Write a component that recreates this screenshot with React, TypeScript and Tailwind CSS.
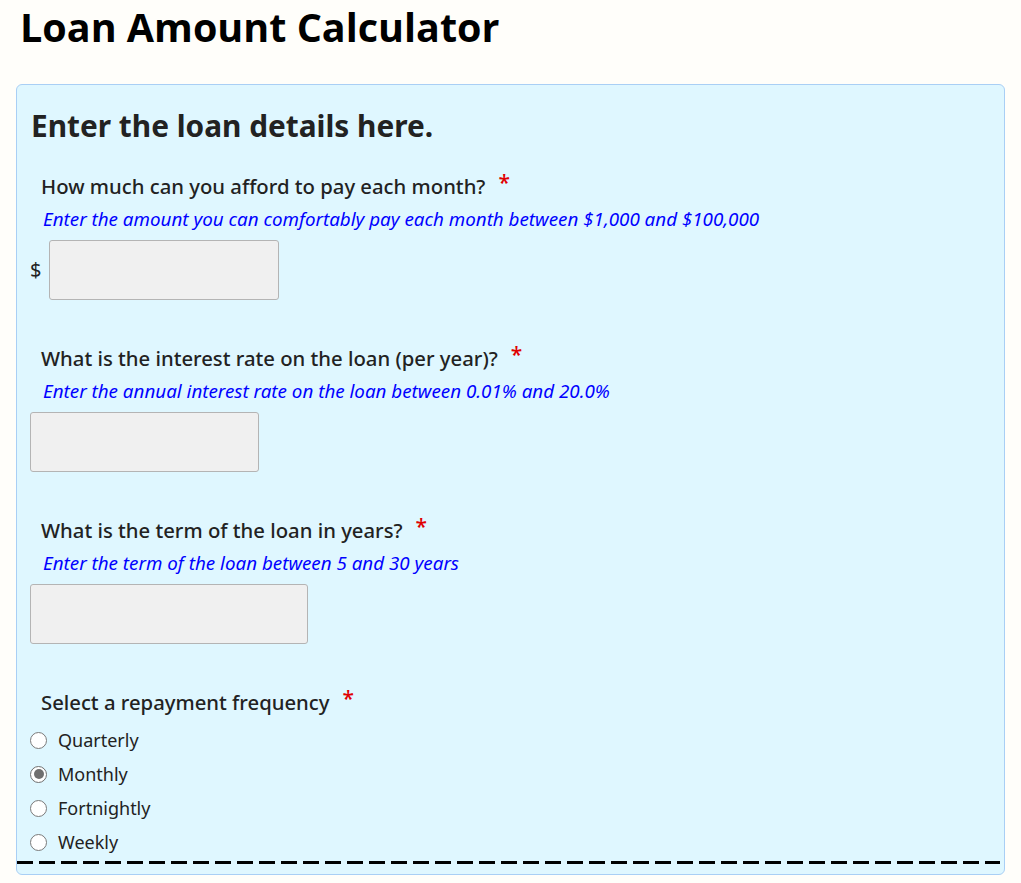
import React from 'react';

const labelFont = { fontFamily: '"Noto Sans", "Open Sans", sans-serif' };

interface QuestionProps {
    label: string;
    hint: string;
    inputWidth: string;
    prefix?: boolean;
}

const Question = ({ label, hint, inputWidth, prefix }: QuestionProps) => (
    <div className="flex flex-col">
        {/* Label with required marker */}
        <div className="h-[30px] flex items-center pl-[11px] text-[20.3px] text-[#222222] font-medium">
            <span>{label}</span>
            <span className="ml-[13px] text-[#e00000] text-[21px] -mt-[7px]">*</span>
        </div>

        {/* Hint */}
        <div className="mt-[6px] h-[24px] flex items-center pl-[13px] text-[18.8px] italic text-[#0000ff]">
            {hint}
        </div>

        {/* Input */}
        <div className="mt-[9px] flex items-center">
            {prefix && <span className="w-[19px] text-[20px] text-[#222222]">$</span>}
            <div className={`${inputWidth} h-[60px] rounded-[3px] border border-[#b4b4b4] bg-[#f0f0f0]`} />
        </div>
    </div>
);

const Radio = ({ label, checked }: { label: string; checked?: boolean }) => (
    <div className="h-[34px] flex items-center">
        <span className={`w-[17px] h-[17px] rounded-full border ${checked ? 'border-[#6f6f6f]' : 'border-[#7a7a7a]'} bg-white flex items-center justify-center`}>
            {checked && <span className="w-[10px] h-[10px] rounded-full bg-[#6f6f6f]" />}
        </span>
        <span className="ml-[11px] text-[18px] text-[#222222]">{label}</span>
    </div>
);

export default function App() {
    return (
        <div className="min-h-screen bg-[#fffefa] pl-[16px] pr-[16px]" style={labelFont}>
            {/* Page title */}
            <h1
                className="pl-[4px] pt-[2px] h-[84px] text-[39.5px] font-bold text-black leading-[50px]"
                style={{ fontFamily: '"Open Sans", sans-serif' }}
            >
                Loan Amount Calculator
            </h1>

            {/* Form panel */}
            <div className="w-[989px] rounded-[6px] border border-[#a9cff5] bg-[#dff7ff] pt-[23px] pb-[10px]">
                <h2 className="pl-[14px] h-[36px] flex items-center text-[29.8px] font-bold text-[#222222]">
                    Enter the loan details here.
                </h2>

                <div className="pl-[13px] mt-[27px] flex flex-col gap-[43px]">
                    <Question
                        label="How much can you afford to pay each month?"
                        hint="Enter the amount you can comfortably pay each month between $1,000 and $100,000"
                        inputWidth="w-[230px]"
                        prefix
                    />
                    <Question
                        label="What is the interest rate on the loan (per year)?"
                        hint="Enter the annual interest rate on the loan between 0.01% and 20.0%"
                        inputWidth="w-[229px]"
                    />
                    <Question
                        label="What is the term of the loan in years?"
                        hint="Enter the term of the loan between 5 and 30 years"
                        inputWidth="w-[278px]"
                    />

                    {/* Repayment frequency */}
                    <div className="flex flex-col">
                        <div className="h-[30px] flex items-center pl-[11px] text-[20.3px] text-[#222222] font-medium">
                            <span>Select a repayment frequency</span>
                            <span className="ml-[13px] text-[#e00000] text-[21px] -mt-[7px]">*</span>
                        </div>
                        <div className="mt-[6px] flex flex-col">
                            <Radio label="Quarterly" />
                            <Radio label="Monthly" checked />
                            <Radio label="Fortnightly" />
                            <Radio label="Weekly" />
                        </div>
                    </div>
                </div>

                {/* Dashed divider */}
                <div className="mt-[2px] mr-[4px] h-[3px] bg-[repeating-linear-gradient(to_right,#000_0_16px,transparent_16px_22px)]" />
            </div>
        </div>
    );
}
